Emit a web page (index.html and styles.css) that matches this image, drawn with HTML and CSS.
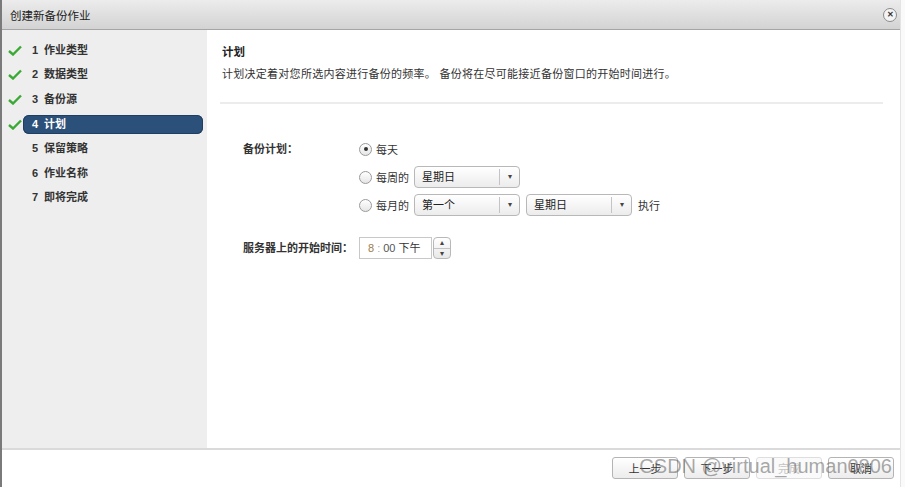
FILE: index.html
```html
<!DOCTYPE html>
<html>
    <head>
        <title>创建新备份作业</title>
        <link rel="stylesheet" href="styles.css">
    </head>
    <body>
        <div class="dialog">
            <div class="title-bar">
                <span class="title">创建新备份作业</span>
                <span class="close">&#x2715;</span>
            </div>
            <div class="main">
                <ul class="steps">
                    <li><span class="check"><svg width="14" height="11" viewBox="0 0 14 11"><path d="M1 6 L5 9.5 L13 1.5" fill="none" stroke="#3aaa35" stroke-width="2.4"/></svg></span><span class="step"><span class="num">1</span>作业类型</span></li>
                    <li><span class="check"><svg width="14" height="11" viewBox="0 0 14 11"><path d="M1 6 L5 9.5 L13 1.5" fill="none" stroke="#3aaa35" stroke-width="2.4"/></svg></span><span class="step"><span class="num">2</span>数据类型</span></li>
                    <li><span class="check"><svg width="14" height="11" viewBox="0 0 14 11"><path d="M1 6 L5 9.5 L13 1.5" fill="none" stroke="#3aaa35" stroke-width="2.4"/></svg></span><span class="step"><span class="num">3</span>备份源</span></li>
                    <li><span class="check"><svg width="14" height="11" viewBox="0 0 14 11"><path d="M1 6 L5 9.5 L13 1.5" fill="none" stroke="#3aaa35" stroke-width="2.4"/></svg></span><span class="step active"><span class="num">4</span>计划</span></li>
                    <li><span class="check"></span><span class="step"><span class="num">5</span>保留策略</span></li>
                    <li><span class="check"></span><span class="step"><span class="num">6</span>作业名称</span></li>
                    <li><span class="check"></span><span class="step"><span class="num">7</span>即将完成</span></li>
                </ul>
                <div class="content">
                    <h2>计划</h2>
                    <p class="desc">计划决定着对您所选内容进行备份的频率。 备份将在尽可能接近备份窗口的开始时间进行。</p>
                    <div class="form">
                        <div class="field">
                            <div class="label">备份计划：</div>
                            <div class="options">
                                <div class="row"><span class="radio checked"></span>每天</div>
                                <div class="row"><span class="radio"></span>每周的<span class="select">星期日<span class="arrow">&#9662;</span></span></div>
                                <div class="row"><span class="radio"></span>每月的<span class="select">第一个<span class="arrow">&#9662;</span></span><span class="select">星期日<span class="arrow">&#9662;</span></span>执行</div>
                            </div>
                        </div>
                        <div class="field time-field">
                            <div class="label">服务器上的开始时间：</div>
                            <div class="row">
                                <span class="time"><span class="hour">8</span><span class="colon">:</span><span class="min">00</span> 下午</span>
                                <span class="spinner"><span>&#9652;</span><span>&#9662;</span></span>
                            </div>
                        </div>
                    </div>
                </div>
            </div>
            <div class="footer">
                <button>上一步</button>
                <button>下一步</button>
                <button disabled>完成</button>
                <button>取消</button>
                <span class="watermark">CSDN @virtual_human0806</span>
            </div>
        </div>
    </body>
</html>
```
FILE: styles.css
```css
body {
    margin: 0;
    background: #fafafa;
    font-family: "Liberation Sans", "Noto Sans CJK SC", sans-serif;
    font-size: 11px;
    color: #333;
}
.dialog {
    width: 898px;
    height: 487px;
    border-left: 2px solid #7a7a7a;
    border-right: 1px solid #e4e4e4;
    background: #fff;
    display: flex;
    flex-direction: column;
}
.title-bar {
    height: 29px;
    border-bottom: 1px solid #a5a5a5;
    background: linear-gradient(#ececec, #d3d3d3);
    display: flex;
    align-items: center;
    justify-content: space-between;
    padding: 0 3px 0 8px;
}
.title {
    font-size: 11.5px;
    color: #222;
}
.close {
    width: 12px;
    height: 12px;
    border: 1px solid #8a8a8a;
    border-radius: 50%;
    background: #f4f4f4;
    font-size: 8px;
    font-weight: bold;
    line-height: 12px;
    text-align: center;
    color: #333;
}
.main {
    display: flex;
    height: 418px;
}
.steps {
    list-style: none;
    margin: 0;
    padding: 8px 0 0 0;
    width: 205px;
    background: #eeeeee;
}
.steps li {
    display: flex;
    align-items: center;
    height: 24.6px;
    padding-left: 6px;
}
.check {
    width: 15px;
    height: 11px;
}
.check svg {
    display: block;
}
.step {
    flex: 1;
    margin-right: 4px;
    height: 19px;
    line-height: 19px;
    padding-left: 9px;
    border-radius: 6px;
    font-weight: bold;
    color: #333;
}
.step.active {
    background: #2b5079;
    color: #fff;
    box-shadow: inset 0 0 0 1px #1f3f62;
}
.num {
    display: inline-block;
    width: 12px;
}
.content {
    flex: 1;
    padding: 14px 17px 0 13px;
}
h2 {
    margin: 0 0 0 2px;
    font-size: 11.5px;
    line-height: 16px;
    font-weight: bold;
    color: #222;
}
.desc {
    margin: 6px 0 0 2px;
    line-height: 16px;
    letter-spacing: 0.27px;
    color: #333;
}
.form {
    border-top: 2px solid #ececec;
    margin-top: 20px;
    padding: 31px 0 0 23px;
}
.field {
    display: flex;
}
.label {
    width: 116px;
    height: 28px;
    line-height: 28px;
    font-weight: bold;
    color: #333;
}
.row {
    display: flex;
    align-items: center;
    height: 28px;
}
.radio {
    width: 11px;
    height: 11px;
    border: 1px solid #9a9a9a;
    border-radius: 50%;
    background: linear-gradient(#fff, #e6e6e6);
    margin-right: 4px;
    position: relative;
}
.radio.checked::after {
    content: "";
    position: absolute;
    left: 3.5px;
    top: 3.5px;
    width: 4px;
    height: 4px;
    border-radius: 50%;
    background: #333;
}
.select {
    width: 106px;
    height: 22px;
    line-height: 20px;
    border: 1px solid #b8b8b8;
    border-radius: 4px;
    background: linear-gradient(#ffffff, #ececec);
    margin: 0 6px 0 5px;
    padding-left: 7px;
    box-sizing: border-box;
    display: flex;
    justify-content: space-between;
    color: #222;
}
.select + .select {
    margin-left: 0;
}
.arrow {
    width: 19px;
    border-left: 1px solid #c4c4c4;
    margin: 2px 0;
    line-height: 16px;
    text-align: center;
    font-size: 8px;
    color: #444;
}
.time-field {
    margin-top: 18px;
}
.time-field .label {
    height: 22px;
    line-height: 22px;
}
.time-field .row {
    height: 22px;
}
.time {
    width: 73px;
    height: 22px;
    line-height: 20px;
    box-sizing: border-box;
    border: 1px solid #c8c8c8;
    padding-left: 8px;
    color: #333;
}
.hour {
    color: #9b7d4f;
}
.colon {
    color: #aaa;
    margin: 0 3px;
}
.min {
    color: #555;
}
.spinner {
    width: 18px;
    height: 22px;
    margin-left: 1px;
    box-sizing: border-box;
    border: 1px solid #b8b8b8;
    border-radius: 4px;
    background: linear-gradient(#ffffff, #e8e8e8);
    display: flex;
    flex-direction: column;
}
.spinner span {
    flex: 1;
    font-size: 8px;
    line-height: 10px;
    text-align: center;
    color: #444;
}
.spinner span + span {
    border-top: 1px solid #c4c4c4;
}
.footer {
    flex: 1;
    border-top: 2px solid #dadada;
    display: flex;
    justify-content: flex-end;
    align-items: flex-start;
    padding: 7px 6px 0 0;
    position: relative;
}
button {
    height: 22px;
    width: 66px;
    margin-left: 6px;
    border: 1px solid #b4b4b4;
    border-radius: 3px;
    background: linear-gradient(#ffffff, #ececec);
    font-family: "Liberation Sans", "Noto Sans CJK SC", sans-serif;
    font-size: 11px;
    color: #333;
}
button:disabled {
    border-color: #dedede;
    background: #fafafa;
    color: #c4c4c4;
}
.watermark {
    position: absolute;
    right: 8px;
    top: 5px;
    font-size: 20px;
    color: rgba(110, 110, 110, 0.6);
    pointer-events: none;
}
```
